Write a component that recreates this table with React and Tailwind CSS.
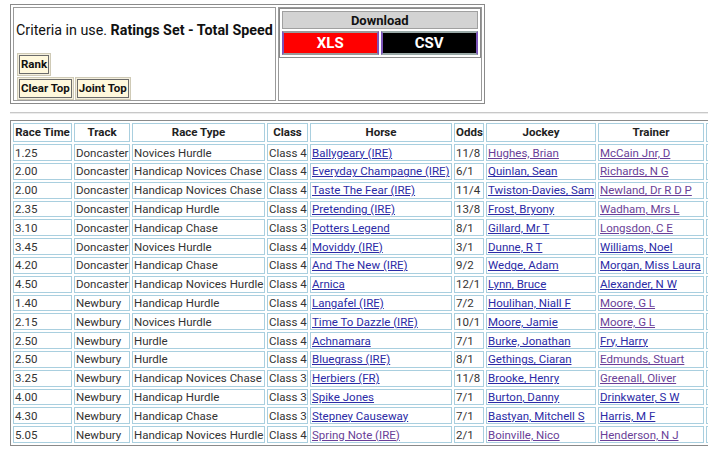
const rows = [
  ["1.25", "Doncaster", "Novices Hurdle", "Class 4", "Ballygeary (IRE)", 0, "11/8", "Hughes, Brian", 1, "McCain Jnr, D", 1],
  ["2.00", "Doncaster", "Handicap Novices Chase", "Class 4", "Everyday Champagne (IRE)", 0, "6/1", "Quinlan, Sean", 0, "Richards, N G", 1],
  ["2.00", "Doncaster", "Handicap Novices Chase", "Class 4", "Taste The Fear (IRE)", 0, "11/4", "Twiston-Davies, Sam", 0, "Newland, Dr R D P", 1],
  ["2.35", "Doncaster", "Handicap Hurdle", "Class 4", "Pretending (IRE)", 0, "13/8", "Frost, Bryony", 0, "Wadham, Mrs L", 1],
  ["3.10", "Doncaster", "Handicap Chase", "Class 3", "Potters Legend", 0, "8/1", "Gillard, Mr T", 0, "Longsdon, C E", 1],
  ["3.45", "Doncaster", "Novices Hurdle", "Class 4", "Moviddy (IRE)", 0, "3/1", "Dunne, R T", 0, "Williams, Noel", 0],
  ["4.20", "Doncaster", "Handicap Chase", "Class 4", "And The New (IRE)", 0, "9/2", "Wedge, Adam", 0, "Morgan, Miss Laura", 0],
  ["4.50", "Doncaster", "Handicap Novices Hurdle", "Class 4", "Arnica", 0, "12/1", "Lynn, Bruce", 0, "Alexander, N W", 0],
  ["1.40", "Newbury", "Handicap Hurdle", "Class 4", "Langafel (IRE)", 0, "7/2", "Houlihan, Niall F", 0, "Moore, G L", 1],
  ["2.15", "Newbury", "Novices Hurdle", "Class 4", "Time To Dazzle (IRE)", 0, "10/1", "Moore, Jamie", 0, "Moore, G L", 1],
  ["2.50", "Newbury", "Hurdle", "Class 4", "Achnamara", 0, "7/1", "Burke, Jonathan", 0, "Fry, Harry", 0],
  ["2.50", "Newbury", "Hurdle", "Class 4", "Bluegrass (IRE)", 0, "8/1", "Gethings, Ciaran", 0, "Edmunds, Stuart", 1],
  ["3.25", "Newbury", "Handicap Novices Chase", "Class 3", "Herbiers (FR)", 0, "11/8", "Brooke, Henry", 0, "Greenall, Oliver", 1],
  ["4.00", "Newbury", "Handicap Hurdle", "Class 3", "Spike Jones", 0, "7/1", "Burton, Danny", 0, "Drinkwater, S W", 0],
  ["4.30", "Newbury", "Handicap Chase", "Class 3", "Stepney Causeway", 0, "7/1", "Bastyan, Mitchell S", 0, "Harris, M F", 0],
  ["5.05", "Newbury", "Handicap Novices Hurdle", "Class 4", "Spring Note (IRE)", 1, "2/1", "Boinville, Nico", 1, "Henderson, N J", 1],
];

const td = "border border-[#a9cfdf] px-[1px] h-[16.8px] leading-[14px] whitespace-nowrap overflow-hidden";
const th = "border border-[#a9cfdf] px-[1px] h-[19px] font-bold text-[#222] text-center whitespace-nowrap overflow-hidden";

function Link({children, visited}) {
  return (
    <a href="#" className={visited ? "underline text-[#6a3f98]" : "underline text-[#2b2ba6]"}>{children}</a>
  );
}

function Btn({children}) {
  return (
    <span className="inline-block border border-[#cfcab6] p-[1px] bg-[#f4efdd]">
      <span className="block border border-[#6b6b6b] bg-[#fff8dc] px-[1px] leading-[17px] font-bold text-[11.5px] text-[#111]">{children}</span>
    </span>
  );
}

export default function App() {
  return (
    <div className="w-[708px] h-[458px] overflow-hidden bg-white font-['Roboto',sans-serif] text-[#333]">
      <table className="mt-[4px] ml-[10px] w-[475px] h-[99px] border border-[#8a8a8a] border-separate border-spacing-[2px]">
        <tbody>
          <tr>
            <td className="w-[262px] border border-[#9a9a9a] align-top px-[2px] pt-[14px]">
              <p className="text-[14.3px] leading-[17px] text-[#111] whitespace-nowrap">
                Criteria in use. <b>Ratings Set - Total Speed</b>
              </p>
              <div className="mt-[12px] ml-[1px] flex flex-col gap-[1px]">
                <div><Btn>Rank</Btn></div>
                <div className="flex gap-[1px]"><Btn>Clear Top</Btn><Btn>Joint Top</Btn></div>
              </div>
            </td>
            <td className="border border-[#9a9a9a] align-top p-0">
              <table className="w-[202px] border border-[#8a8a8a] border-separate border-spacing-[2px]">
                <tbody>
                  <tr>
                    <td colSpan={2} className="bg-[#d3d3d3] border border-[#a0a0a0] h-[18px] text-center font-bold text-[13px] leading-[15px] text-[#111]">
                      Download
                    </td>
                  </tr>
                  <tr>
                    <td className="p-0 w-[97px]">
                      <div className="bg-[#ff0000] border-x-2 border-x-[#7b54b8] border-y-2 border-y-[#9a9a9a] h-[24px] flex items-center justify-center text-white font-bold text-[15px]">XLS</div>
                    </td>
                    <td className="p-0">
                      <div className="bg-black border-x-2 border-x-[#7b54b8] border-y-2 border-y-[#9aaaa8] h-[24px] flex items-center justify-center text-white font-bold text-[15px]">CSV</div>
                    </td>
                  </tr>
                </tbody>
              </table>
            </td>
          </tr>
        </tbody>
      </table>

      <div className="ml-[10px] mt-[8px] border-t border-t-[#c8c8c8] border-b border-b-[#ececec]" />

      <table className="mt-[6px] ml-[10px] table-fixed w-[809px] border border-[#8a8a8a] border-separate border-spacing-[2px] text-[11.5px]">
        <colgroup>
          <col className="w-[59px]" />
          <col className="w-[56px]" />
          <col className="w-[133px]" />
          <col className="w-[41px]" />
          <col className="w-[142px]" />
          <col className="w-[30px]" />
          <col className="w-[110px]" />
          <col className="w-[106px]" />
          <col className="w-[110px]" />
        </colgroup>
        <thead>
          <tr>
            <th className={th}>Race Time</th>
            <th className={th}>Track</th>
            <th className={th}>Race Type</th>
            <th className={th}>Class</th>
            <th className={th}>Horse</th>
            <th className={th}>Odds</th>
            <th className={th}>Jockey</th>
            <th className={th}>Trainer</th>
            <th className={th}>Sire</th>
          </tr>
        </thead>
        <tbody>
          {rows.map((r, i) => (
            <tr key={i}>
              <td className={td}>{r[0]}</td>
              <td className={td}>{r[1]}</td>
              <td className={td}>{r[2]}</td>
              <td className={td}>{r[3]}</td>
              <td className={td}><Link visited={r[5]}>{r[4]}</Link></td>
              <td className={td}>{r[6]}</td>
              <td className={td}><Link visited={r[8]}>{r[7]}</Link></td>
              <td className={td}><Link visited={r[10]}>{r[9]}</Link></td>
              <td className={td}>Shirocco</td>
            </tr>
          ))}
        </tbody>
      </table>
    </div>
  );
}
